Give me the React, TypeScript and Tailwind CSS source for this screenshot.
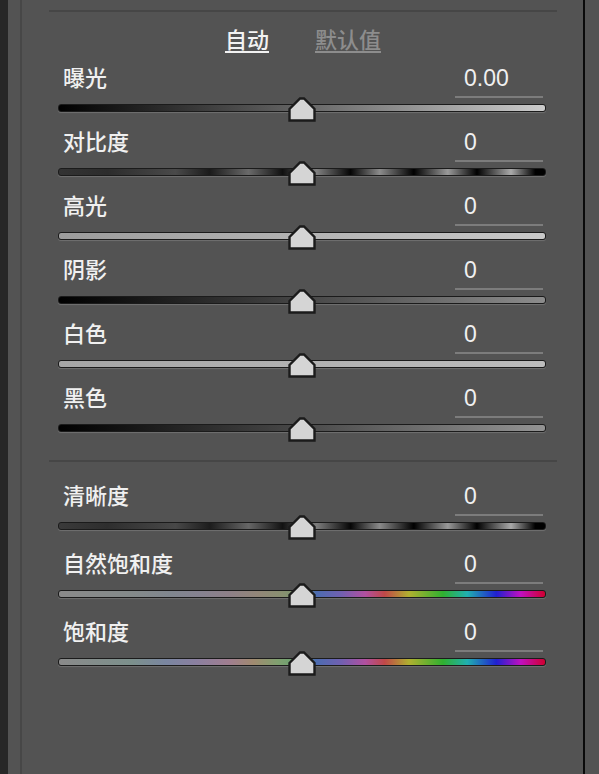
import React from "react";

const TRACKS: Record<string, string> = {
  exposure: "bg-[linear-gradient(to_right,#000000,#cbcbcb)]",
  contrast:
    "bg-[linear-gradient(to_right,#333333_0%,#2c2c2c_10%,#4a4a4a_24%,#1a1a1a_31%,#6a6a6a_39%,#101010_46%,#808080_53%,#050505_60%,#8c8c8c_66%,#000000_73%,#9a9a9a_80%,#000000_86%,#aaaaaa_93%,#000000_98%)]",
  highlights: "bg-[linear-gradient(to_right,#9c9c9c,#c9c9c9)]",
  shadows: "bg-[linear-gradient(to_right,#000000,#8c8c8c)]",
  whites: "bg-[linear-gradient(to_right,#a6a6a6,#bdbdbd)]",
  blacks: "bg-[linear-gradient(to_right,#000000,#939393)]",
  clarity:
    "bg-[linear-gradient(to_right,#3a3a3a_0%,#2e2e2e_10%,#484848_24%,#1c1c1c_31%,#666666_39%,#121212_46%,#7c7c7c_53%,#060606_60%,#8a8a8a_66%,#000000_73%,#999999_80%,#000000_86%,#a8a8a8_93%,#000000_98%)]",
  vibrance:
    "bg-[linear-gradient(to_right,#8a8a8a_0%,#848a8a_15%,#80868e_23%,#868290_29%,#8e8088_35%,#928678_41%,#889070_46%,#74966e_50%,#4c6cb0_53%,#7060b0_58%,#b050a0_63%,#c04848_67%,#b0b030_72%,#30b030_79%,#20b0b0_84%,#2020d0_90%,#c010c0_95%,#d00030_100%)]",
  saturation:
    "bg-[linear-gradient(to_right,#8a8a8a_0%,#7c908c_15%,#7a86a0_22%,#8a80a0_28%,#a07e90_35%,#a08a70_40%,#80a070_45%,#68a070_49%,#4c6cb0_53%,#7060b0_58%,#b050a0_63%,#c04848_67%,#b0b030_72%,#30b030_79%,#20b0b0_84%,#2020d0_90%,#c010c0_95%,#d00030_100%)]",
};

function Thumb() {
  return (
    <svg
      className="absolute left-1/2 top-0 -translate-x-1/2"
      width="28"
      height="25"
      viewBox="0 0 28 25"
    >
      <polygon
        points="1.5,12 12,1.5 16,1.5 26.5,12 26.5,23.5 1.5,23.5"
        fill="#d5d5d5"
        stroke="#1b1b1b"
        strokeWidth="2.4"
        strokeLinejoin="miter"
      />
    </svg>
  );
}

function Row({
  label,
  value,
  track,
  tall,
}: {
  label: string;
  value: string;
  track: string;
  tall?: boolean;
}) {
  return (
    <div className={tall ? "h-[68px]" : "h-[64px]"}>
      <div className="flex items-start justify-between pt-[4px]">
        <span className="-mt-[2px] pl-[14px] text-[22px] font-medium leading-[24px] text-[#f0f0f0]">{label}</span>
        <div className="mr-[14px] h-[32px] w-[88px] border-b-2 border-[#7c7c7c] pl-[9px] font-['Liberation_Sans',sans-serif] text-[23px] leading-[24px] text-[#f0f0f0]">
          {value}
        </div>
      </div>
      <div className="relative -mt-px ml-[9px] h-[25px] w-[488px]">
        <div
          className={`absolute inset-x-0 top-[7px] h-[8px] rounded-[3px] border-[1.5px] border-[#1b1b1b] shadow-[0_1px_1px_rgba(120,120,120,0.8)] ${track}`}
        />
        <Thumb />
      </div>
    </div>
  );
}

export default function App() {
  return (
    <div className="flex h-[774px] w-[599px] overflow-hidden bg-[#535353] font-['Noto_Sans_CJK_SC','Noto_Sans',sans-serif]">
      <div className="w-[8px] bg-[#272727]" />
      <div className="w-[12px]" />
      <div className="w-[2px] bg-[#474747]" />
      <div className="w-[561px] pl-[27px]">
        <div className="w-[508px] pt-[10px]">
          <div className="h-[2px] bg-[#464646]" />
          <div className="mt-[14px] flex h-[26px] justify-center gap-[46px] text-[22px] font-medium leading-[24px]">
            <span className="text-[#f2f2f2] underline decoration-[1.5px] underline-offset-[3px]">自动</span>
            <span className="text-[#8d8d8d] underline decoration-[1.5px] underline-offset-[3px]">默认值</span>
          </div>
          <div className="mt-[10px]">
            <Row label="曝光" value="0.00" track={TRACKS.exposure} />
            <Row label="对比度" value="0" track={TRACKS.contrast} />
            <Row label="高光" value="0" track={TRACKS.highlights} />
            <Row label="阴影" value="0" track={TRACKS.shadows} />
            <Row label="白色" value="0" track={TRACKS.whites} />
            <Row label="黑色" value="0" track={TRACKS.blacks} />
          </div>
          <div className="mt-[14px] h-[2px] bg-[#464646]" />
          <div className="mt-[18px]">
            <Row label="清晰度" value="0" track={TRACKS.clarity} tall />
            <Row label="自然饱和度" value="0" track={TRACKS.vibrance} tall />
            <Row label="饱和度" value="0" track={TRACKS.saturation} tall />
          </div>
        </div>
      </div>
      <div className="w-[2px] bg-[#0a0a0a]" />
      <div className="flex-1" />
    </div>
  );
}
